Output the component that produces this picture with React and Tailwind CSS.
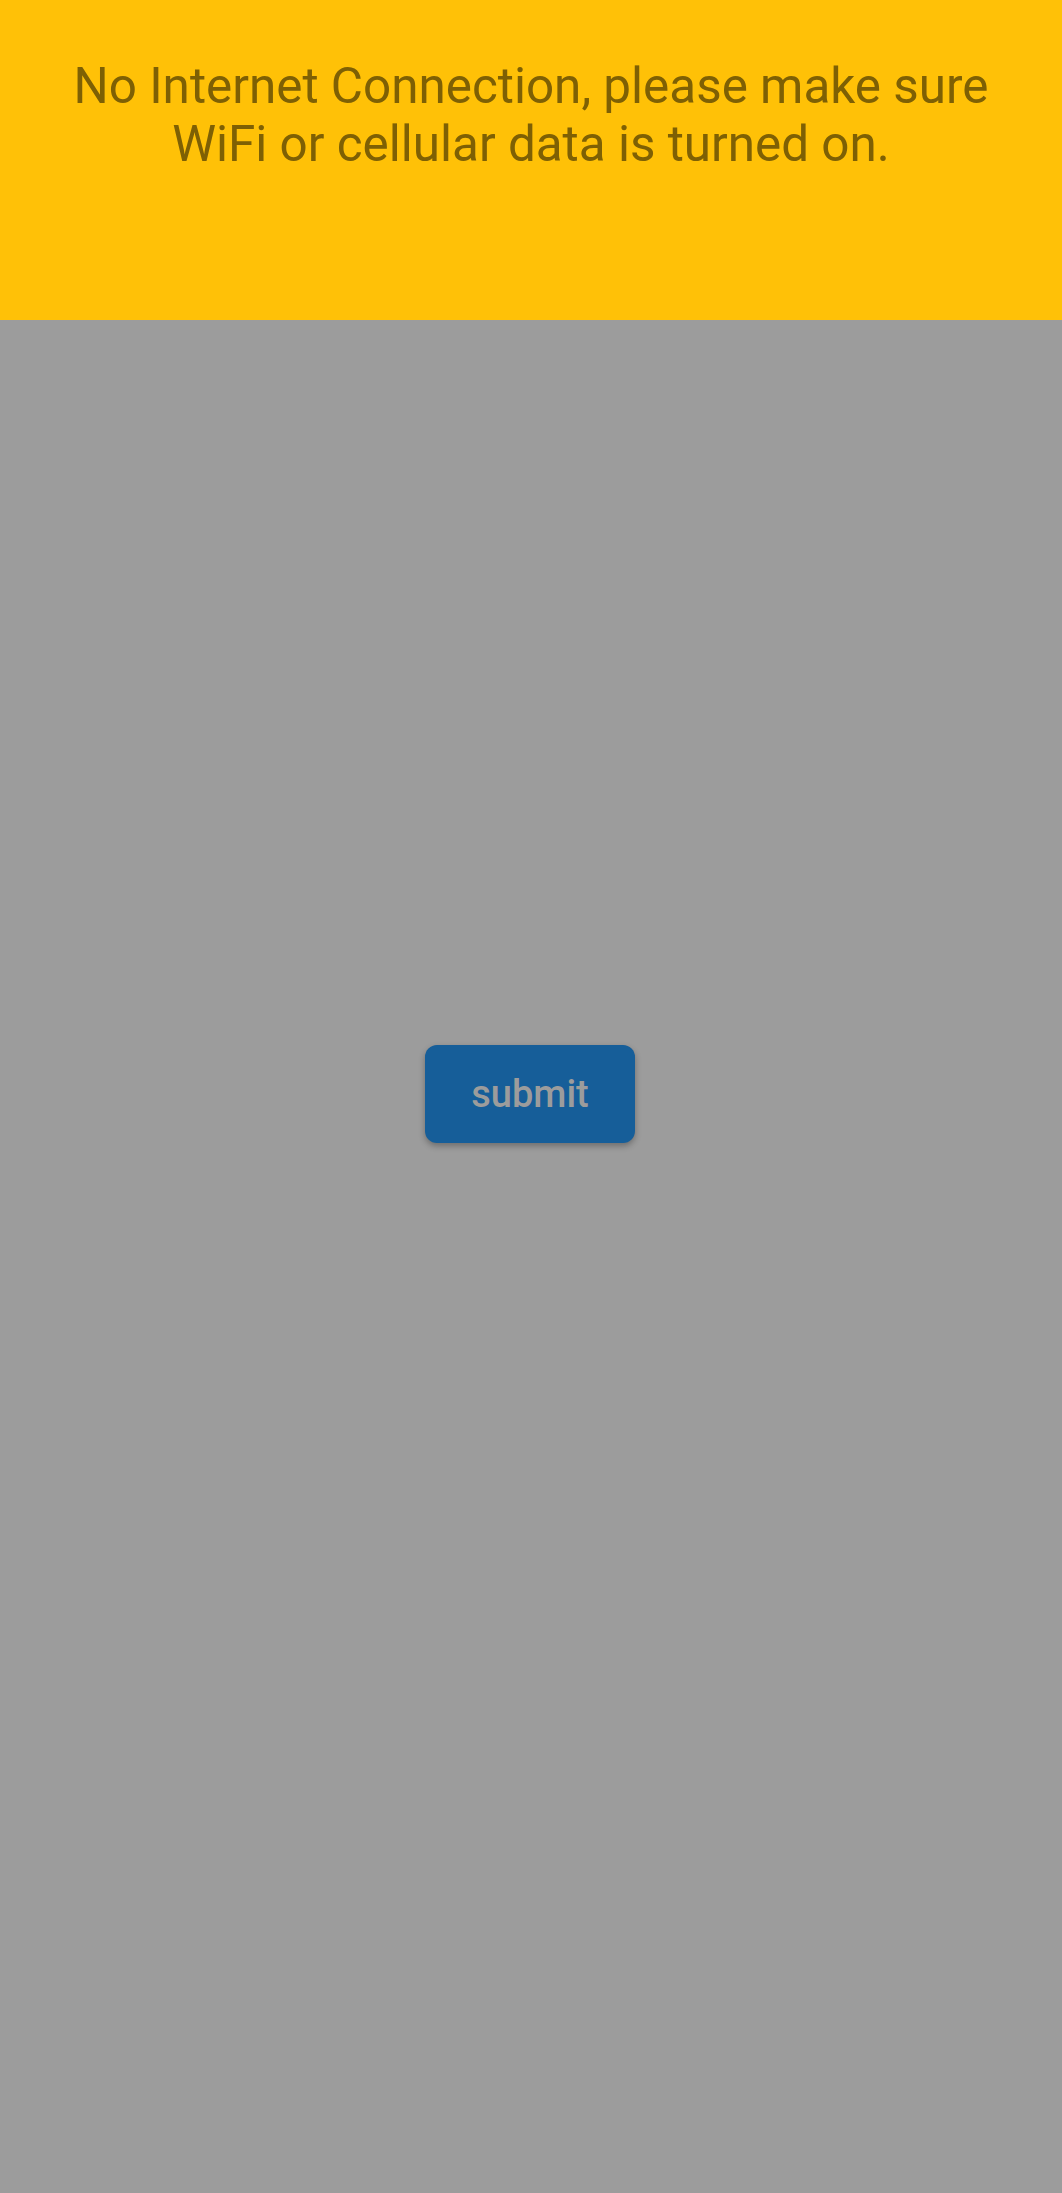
export default function App() {
  return (
    <div
      className="relative flex h-[2193px] w-full items-center justify-center bg-[#9c9c9c]"
      style={{ fontFamily: 'Roboto, "Noto Sans", sans-serif' }}
    >
      <div className="absolute left-0 right-0 top-0 h-[320px] bg-[#ffc107] px-[60px] pt-[57px] text-center text-[49.4px] leading-[58px] text-[#7e6004]">
        No Internet Connection, please make sure WiFi or cellular data is turned on.
      </div>

      <button
        type="button"
        className="mr-[2px] mt-[-5px] h-[98px] w-[210px] rounded-[12px] bg-[#165e99] text-[38px] font-medium text-[#9c9c9c] shadow-[0_3px_6px_rgba(0,0,0,0.3)]"
      >
        submit
      </button>
    </div>
  );
}
